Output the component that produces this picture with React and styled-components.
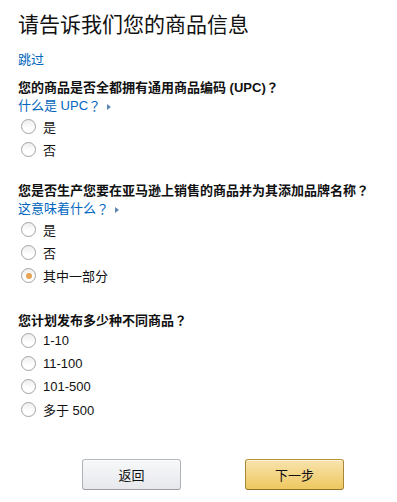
import React, { useState } from "react";
import styled, { createGlobalStyle } from "styled-components";

const Global = createGlobalStyle`
  html, body { margin: 0; padding: 0; background: #fff; }
  body {
    font-family: "Liberation Sans", Arial, "Noto Sans CJK SC", sans-serif;
    color: #111;
    font-size: 13px;
  }
`;

const Page = styled.div`
  padding: 10px 18px 0 18px;
  display: flex;
  flex-direction: column;
`;

const Title = styled.h1`
  margin: 0;
  font-size: 21px;
  font-weight: 400;
  line-height: 30px;
  height: 30px;
  color: #111;
`;

const Link = styled.a`
  color: #0066c0;
  text-decoration: none;
  font-size: 13px;
  line-height: 19px;
  height: 19px;
  display: flex;
  align-items: center;
  cursor: pointer;
  white-space: nowrap;
`;

const SkipLink = styled(Link)`
  margin-top: 10px;
`;

const Punct = styled.span`
  font-family: "Noto Sans CJK TC", "Noto Sans CJK SC", sans-serif;
`;

const Caret = styled.span`
  display: inline-block;
  width: 0;
  height: 0;
  border-top: 3px solid transparent;
  border-bottom: 3px solid transparent;
  border-left: 4px solid #5f87b5;
  margin-left: ${(p) => p.$offset || 6}px;
  margin-top: 2px;
`;

const Section = styled.section`
  display: flex;
  flex-direction: column;
  margin-top: ${(p) => p.$top}px;
`;

const Question = styled.div`
  font-weight: 700;
  font-size: 13px;
  line-height: 19px;
  height: 19px;
  color: #111;
  white-space: nowrap;
`;

const Options = styled.div`
  display: flex;
  flex-direction: column;
`;

const OptionRow = styled.label`
  display: flex;
  align-items: center;
  height: 23px;
  gap: 7px;
  padding-left: 3px;
  font-size: 13px;
  color: #111;
  cursor: pointer;
`;

const RadioInput = styled.input.attrs({ type: "radio" })`
  appearance: none;
  -webkit-appearance: none;
  margin: 0;
  width: 15px;
  height: 15px;
  border-radius: 50%;
  border: 1px solid #a3a3a3;
  background: linear-gradient(to bottom, #eeeeee, #ffffff 65%);
  position: relative;
  flex: none;
  cursor: pointer;

  &:checked::after {
    content: "";
    position: absolute;
    left: 3.5px;
    top: 3.5px;
    width: 6px;
    height: 6px;
    border-radius: 50%;
    background: #e8a456;
  }
`;

const ButtonBar = styled.div`
  display: flex;
  gap: 64px;
  padding-left: 64px;
  margin-top: 38px;
`;

const Button = styled.button`
  width: 99px;
  height: 31px;
  border-radius: 3px;
  font-family: "Liberation Sans", "Noto Sans CJK SC", sans-serif;
  font-size: 13px;
  color: #111;
  cursor: pointer;
  border: 1px solid;
  border-color: ${(p) => (p.$primary ? "#b7952f #a88734 #8f7429" : "#b5b8bd #adb1b8 #9a9ea4")};
  background: ${(p) =>
    p.$primary
      ? "linear-gradient(to bottom, #f8e3ad, #eec860)"
      : "linear-gradient(to bottom, #f7f8fa, #e6e8eb)"};
  box-shadow: 0 1px 0 rgba(255, 255, 255, 0.6) inset;
`;

function RadioGroup({ name, options, initial }) {
  const [value, setValue] = useState(initial);
  return (
    <Options>
      {options.map((o) => (
        <OptionRow key={o}>
          <RadioInput
            name={name}
            checked={value === o}
            onChange={() => setValue(o)}
          />
          <span>{o}</span>
        </OptionRow>
      ))}
    </Options>
  );
}

export default function App() {
  return (
    <>
      <Global />
      <Page>
        <Title>请告诉我们您的商品信息</Title>
        <SkipLink>跳过</SkipLink>

        <Section $top={8}>
          <Question>
            您的商品是否全都拥有通用商品编码 (UPC)<Punct>？</Punct>
          </Question>
          <Link>
            什么是 UPC<Punct>？</Punct>
            <Caret $offset={6} />
          </Link>
          <RadioGroup name="upc" options={["是", "否"]} />
        </Section>

        <Section $top={19}>
          <Question>
            您是否生产您要在亚马逊上销售的商品并为其添加品牌名称<Punct>？</Punct>
          </Question>
          <Link>
            这意味着什么<Punct>？</Punct>
            <Caret $offset={6} />
          </Link>
          <RadioGroup name="brand" options={["是", "否", "其中一部分"]} initial="其中一部分" />
        </Section>

        <Section $top={23}>
          <Question>
            您计划发布多少种不同商品<Punct>？</Punct>
          </Question>
          <RadioGroup name="count" options={["1-10", "11-100", "101-500", "多于 500"]} />
        </Section>

        <ButtonBar>
          <Button>返回</Button>
          <Button $primary>下一步</Button>
        </ButtonBar>
      </Page>
    </>
  );
}
